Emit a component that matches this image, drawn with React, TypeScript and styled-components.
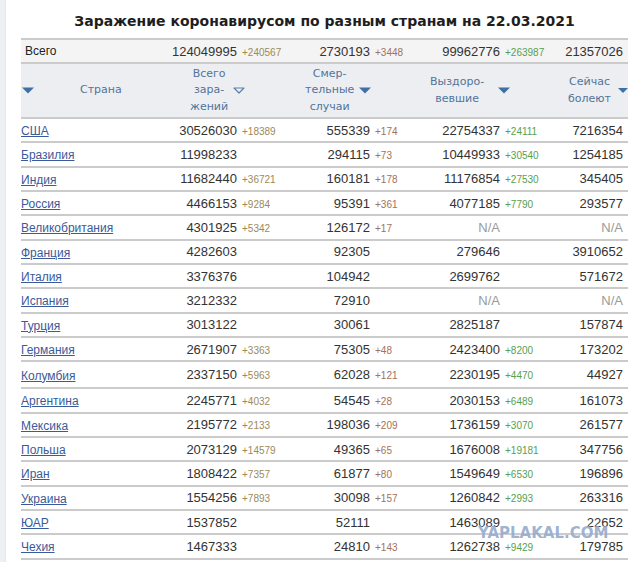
import React from 'react';
import styled, { createGlobalStyle } from 'styled-components';

const Global = createGlobalStyle`
  html, body { margin: 0; padding: 0; background: #fff; }
  body { width: 640px; height: 562px; overflow: hidden; }
`;

type Row = {
  country: string;
  inf: string;
  infD?: string;
  death: string;
  deathD?: string;
  rec: string;
  recD?: string;
  active: string;
  tall?: boolean;
};

const rows: Row[] = [
  { country: 'США', inf: '30526030', infD: '+18389', death: '555339', deathD: '+174', rec: '22754337', recD: '+24111', active: '7216354' },
  { country: 'Бразилия', inf: '11998233', death: '294115', deathD: '+73', rec: '10449933', recD: '+30540', active: '1254185' },
  { country: 'Индия', inf: '11682440', infD: '+36721', death: '160181', deathD: '+178', rec: '11176854', recD: '+27530', active: '345405' },
  { country: 'Россия', inf: '4466153', infD: '+9284', death: '95391', deathD: '+361', rec: '4077185', recD: '+7790', active: '293577' },
  { country: 'Великобритания', inf: '4301925', infD: '+5342', death: '126172', deathD: '+17', rec: 'N/A', active: 'N/A' },
  { country: 'Франция', inf: '4282603', death: '92305', rec: '279646', active: '3910652' },
  { country: 'Италия', inf: '3376376', death: '104942', rec: '2699762', active: '571672' },
  { country: 'Испания', inf: '3212332', death: '72910', rec: 'N/A', active: 'N/A' },
  { country: 'Турция', inf: '3013122', death: '30061', rec: '2825187', active: '157874' },
  { country: 'Германия', inf: '2671907', infD: '+3363', death: '75305', deathD: '+48', rec: '2423400', recD: '+8200', active: '173202' },
  { country: 'Колумбия', inf: '2337150', infD: '+5963', death: '62028', deathD: '+121', rec: '2230195', recD: '+4470', active: '44927', tall: true },
  { country: 'Аргентина', inf: '2245771', infD: '+4032', death: '54545', deathD: '+28', rec: '2030153', recD: '+6489', active: '161073' },
  { country: 'Мексика', inf: '2195772', infD: '+2133', death: '198036', deathD: '+209', rec: '1736159', recD: '+3070', active: '261577' },
  { country: 'Польша', inf: '2073129', infD: '+14579', death: '49365', deathD: '+65', rec: '1676008', recD: '+19181', active: '347756' },
  { country: 'Иран', inf: '1808422', infD: '+7357', death: '61877', deathD: '+80', rec: '1549649', recD: '+6530', active: '196896' },
  { country: 'Украина', inf: '1554256', infD: '+7893', death: '30098', deathD: '+157', rec: '1260842', recD: '+2993', active: '263316' },
  { country: 'ЮАР', inf: '1537852', death: '52111', rec: '1463089', active: '22652' },
  { country: 'Чехия', inf: '1467333', death: '24810', deathD: '+143', rec: '1262738', recD: '+9429', active: '179785' },
];

const COLS = '129px 140px 130px 145px 63px';

const Page = styled.div`
  display: flex;
  width: 640px;
  height: 562px;
  background: #fff;
`;

const Strip = styled.div`
  width: 5px;
  flex: none;
  background: #eef0f3;
  border-right: 1px solid #e3e6ea;
`;

const Content = styled.div`
  position: relative;
  flex: 1;
  padding-left: 15px;
`;

const Title = styled.h1`
  margin: 0;
  width: 607px;
  padding: 12px 0 8px;
  font: bold 14px/18px 'DejaVu Sans', Verdana, sans-serif;
  color: #1e1e1e;
  text-align: center;
`;

const Table = styled.div`
  width: 607px;
  font-family: 'Liberation Sans', Arial, sans-serif;
`;

const GridRow = styled.div<{ $h: number; $bg?: string }>`
  display: grid;
  grid-template-columns: ${COLS};
  align-items: center;
  box-sizing: border-box;
  height: ${(p) => p.$h}px;
  border-top: 2px solid #cbcbcb;
  background: ${(p) => p.$bg || '#fff'};
`;

const LastLine = styled.div`
  width: 607px;
  border-top: 2px solid #cbcbcb;
`;

const TotalLabel = styled.div`
  padding-left: 4px;
  font-size: 12px;
  color: #222;
`;

const NumCell = styled.div<{ $w: number }>`
  display: grid;
  grid-template-columns: ${(p) => p.$w}px auto;
  column-gap: 5px;
  align-items: baseline;
`;

const Num = styled.span<{ $na?: boolean }>`
  text-align: right;
  font-size: 13px;
  color: ${(p) => (p.$na ? '#9a9a9a' : '#333')};
  white-space: nowrap;
`;

const Delta = styled.span<{ $c: string }>`
  font-size: 10px;
  color: ${(p) => p.$c};
  white-space: nowrap;
`;

const ActiveCell = styled.div<{ $na?: boolean }>`
  text-align: right;
  padding-right: 5px;
  font-size: 13px;
  color: ${(p) => (p.$na ? '#9a9a9a' : '#333')};
`;

const CountryLink = styled.a`
  font-size: 12px;
  color: #3a5a9a;
  text-decoration: underline;
  cursor: pointer;
`;

const HeadCell = styled.div<{ $pl: number; $gap: number }>`
  display: flex;
  align-items: center;
  padding-left: ${(p) => p.$pl}px;
  gap: ${(p) => p.$gap}px;
`;

const HeadText = styled.div`
  font: 11px/16.5px 'DejaVu Sans', Verdana, sans-serif;
  color: #52749b;
  text-align: center;
`;

const Watermark = styled.div`
  position: absolute;
  left: 472px;
  top: 525px;
  font: bold 15px/16px 'DejaVu Sans', Verdana, sans-serif;
  color: rgba(95, 128, 178, 0.62);
  text-shadow: 0 0 1px rgba(255, 255, 255, 0.8);
  pointer-events: none;
`;

const INF = '#9b8a58';
const DEATH = '#a3715d';
const REC = '#58a050';

const Arrow: React.FC<{ hollow?: boolean }> = ({ hollow }) => (
  <svg width="12" height="7" viewBox="0 0 12 7">
    {hollow ? (
      <polygon points="1,1 11,1 6,6" fill="none" stroke="#5a80ad" strokeWidth="1.2" strokeLinejoin="round" />
    ) : (
      <polygon points="0,0.5 12,0.5 6,6.5" fill="#3e6fa6" />
    )}
  </svg>
);

const Cell: React.FC<{ w: number; n: string; d?: string; c: string }> = ({ w, n, d, c }) => (
  <NumCell $w={w}>
    <Num $na={n === 'N/A'}>{n}</Num>
    {d ? <Delta $c={c}>{d}</Delta> : <span />}
  </NumCell>
);

export default function App() {
  return (
    <Page>
      <Global />
      <Strip />
      <Content>
        <Title>Заражение коронавирусом по разным странам на 22.03.2021</Title>
        <Table>
          <GridRow $h={24} $bg="#f4f4f4">
            <TotalLabel>Всего</TotalLabel>
            <Cell w={87} n="124049995" d="+240567" c={INF} />
            <Cell w={80} n="2730193" d="+3448" c={DEATH} />
            <Cell w={80} n="99962776" d="+263987" c={REC} />
            <ActiveCell>21357026</ActiveCell>
          </GridRow>
          <GridRow $h={55} $bg="#eceef1">
            <HeadCell $pl={1} $gap={46}>
              <Arrow />
              <HeadText>Страна</HeadText>
            </HeadCell>
            <HeadCell $pl={40} $gap={5}>
              <HeadText>
                Всего<br />зара-<br />жений
              </HeadText>
              <Arrow hollow />
            </HeadCell>
            <HeadCell $pl={15} $gap={5}>
              <HeadText>
                Смер-<br />тельные<br />случаи
              </HeadText>
              <Arrow />
            </HeadCell>
            <HeadCell $pl={10} $gap={14}>
              <HeadText>
                Выздоро-<br />вевшие
              </HeadText>
              <Arrow />
            </HeadCell>
            <HeadCell $pl={3} $gap={7}>
              <HeadText>
                Сейчас<br />болеют
              </HeadText>
              <Arrow />
            </HeadCell>
          </GridRow>
          {rows.map((r) => (
            <GridRow key={r.country} $h={r.tall ? 27 : 24.33}>
              <div>
                <CountryLink>{r.country}</CountryLink>
              </div>
              <Cell w={87} n={r.inf} d={r.infD} c={INF} />
              <Cell w={80} n={r.death} d={r.deathD} c={DEATH} />
              <Cell w={80} n={r.rec} d={r.recD} c={REC} />
              <ActiveCell $na={r.active === 'N/A'}>{r.active}</ActiveCell>
            </GridRow>
          ))}
          <LastLine />
        </Table>
        <Watermark>YAPLAKAL.COM</Watermark>
      </Content>
    </Page>
  );
}
